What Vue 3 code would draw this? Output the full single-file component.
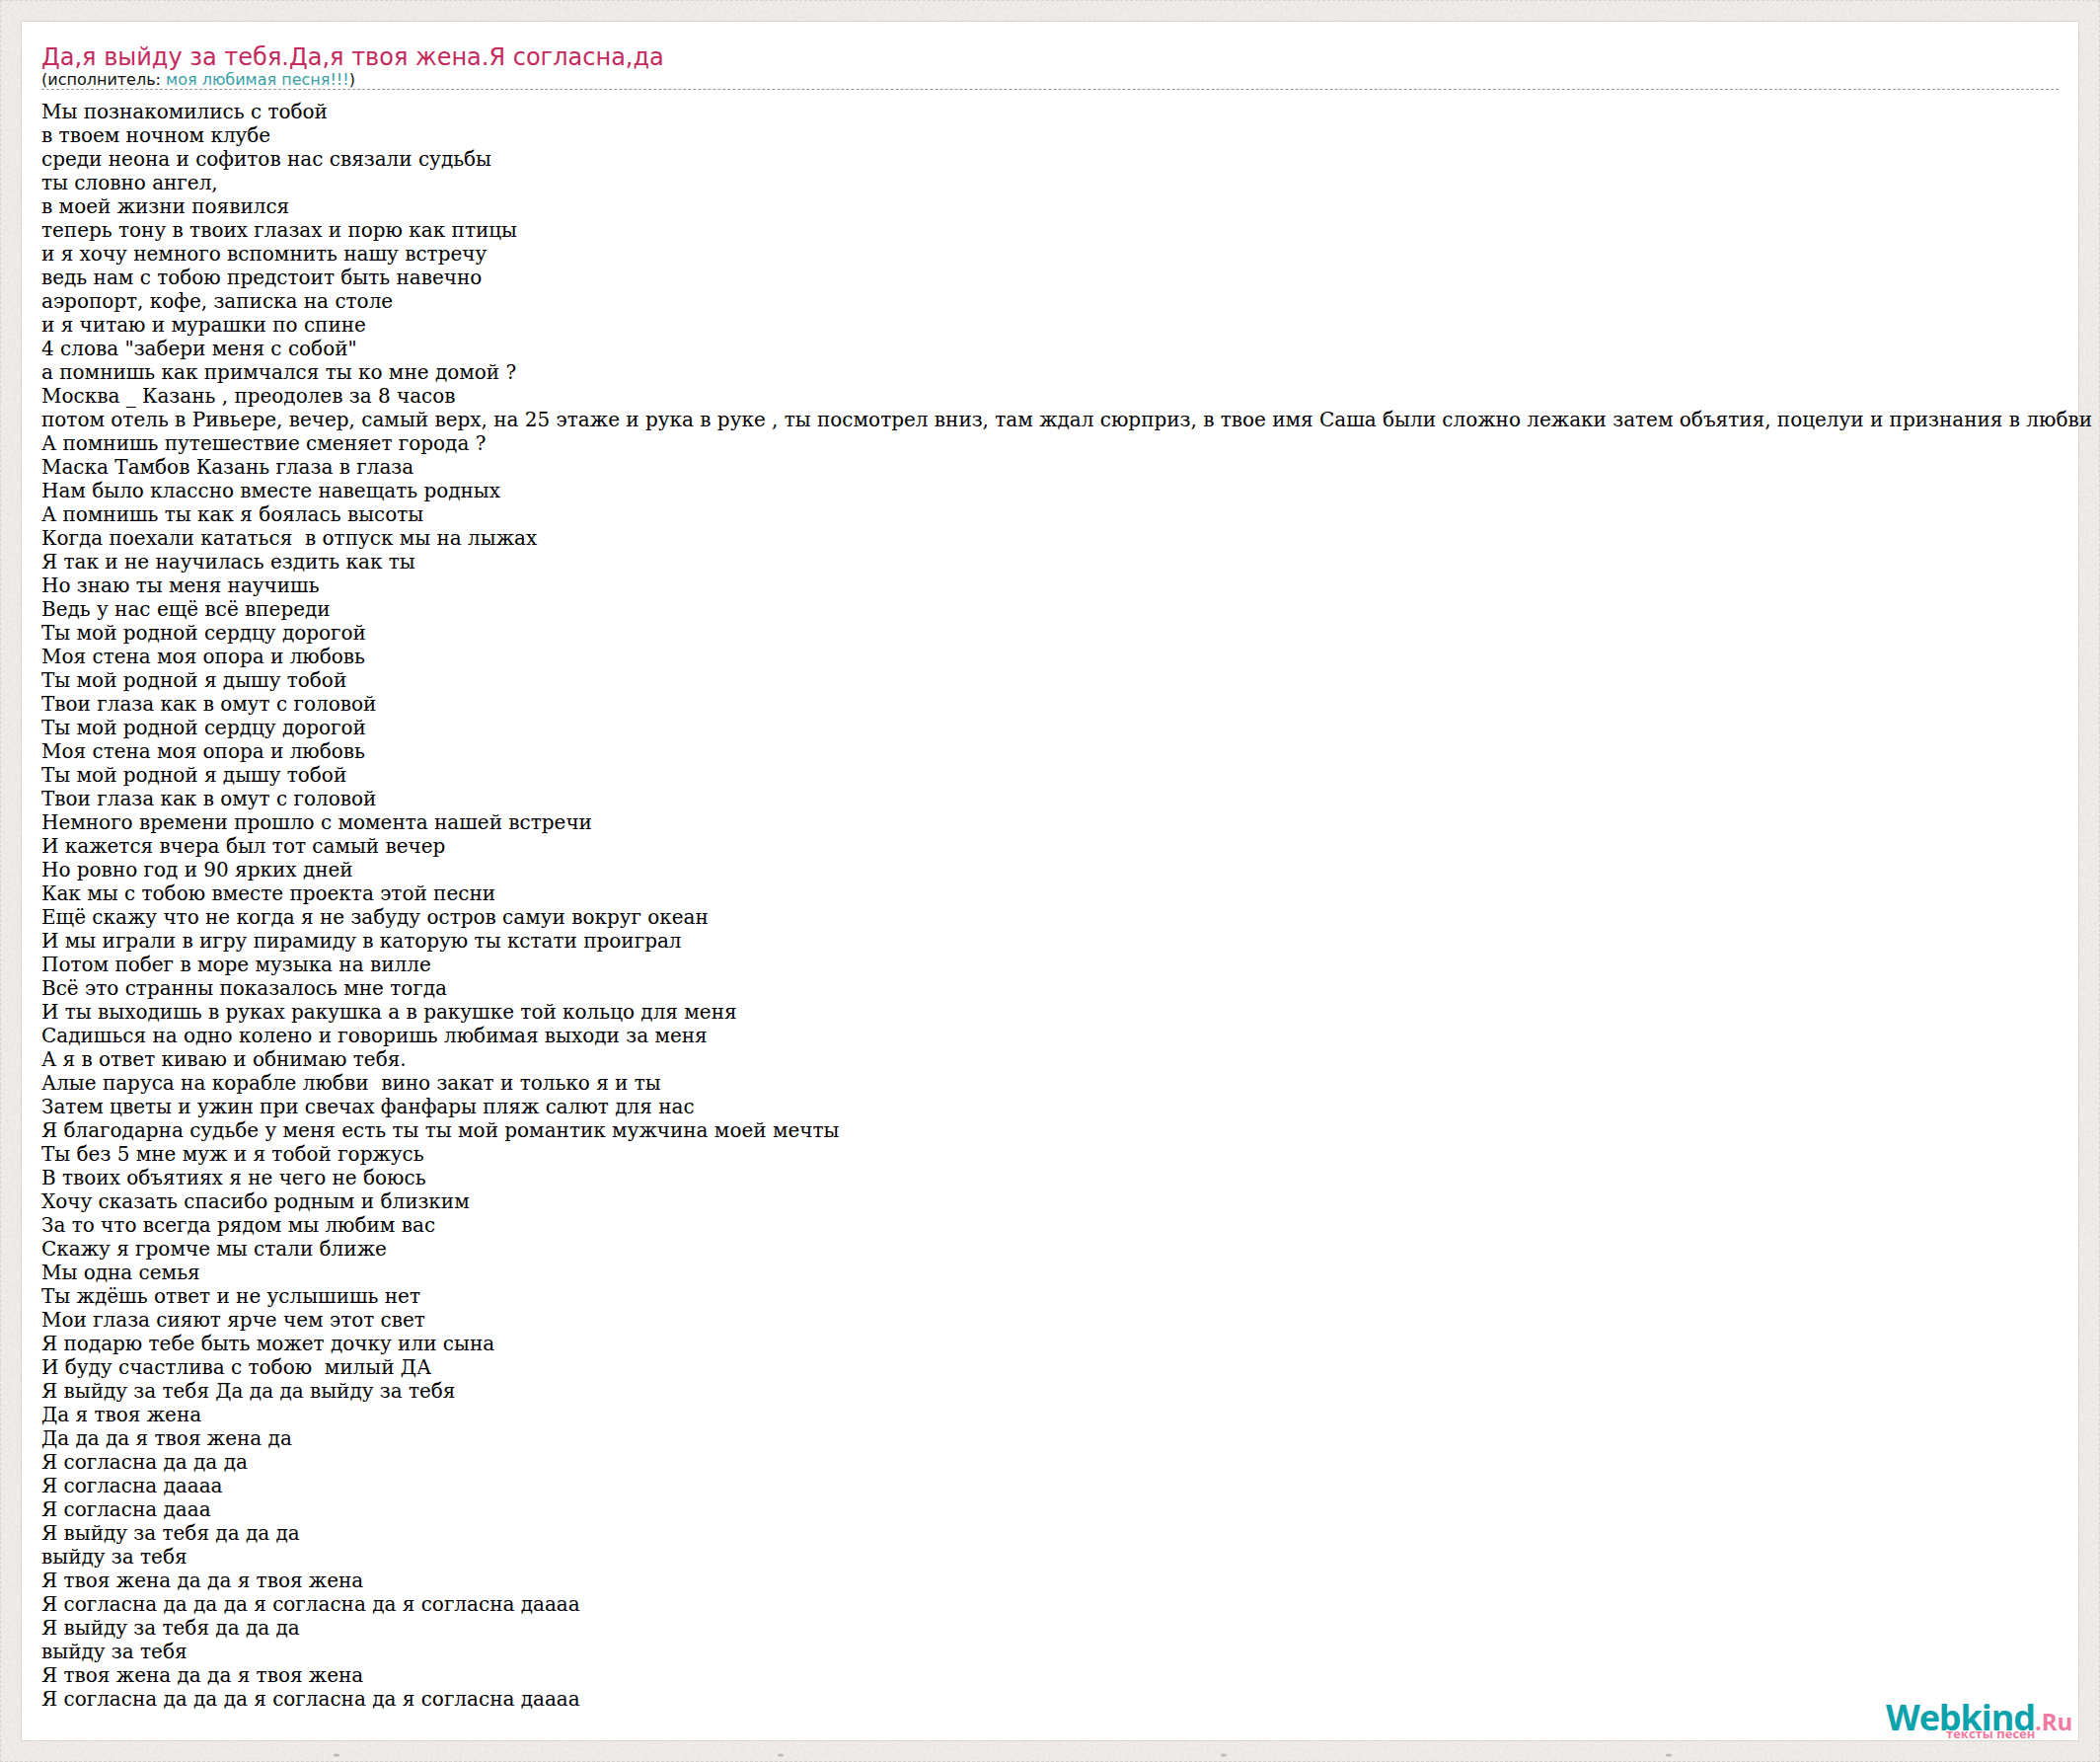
<script setup>
const specks = [341, 791, 1240, 1691]
const lines = `Мы познакомились с тобой
в твоем ночном клубе
среди неона и софитов нас связали судьбы
ты словно ангел,
в моей жизни появился
теперь тону в твоих глазах и порю как птицы
и я хочу немного вспомнить нашу встречу
ведь нам с тобою предстоит быть навечно
аэропорт, кофе, записка на столе
и я читаю и мурашки по спине
4 слова "забери меня с собой"
а помнишь как примчался ты ко мне домой ?
Москва _ Казань , преодолев за 8 часов
потом отель в Ривьере, вечер, самый верх, на 25 этаже и рука в руке , ты посмотрел вниз, там ждал сюрприз, в твое имя Саша были сложно лежаки затем объятия, поцелуи и признания в любви
А помнишь путешествие сменяет города ?
Маска Тамбов Казань глаза в глаза
Нам было классно вместе навещать родных
А помнишь ты как я боялась высоты
Когда поехали кататься  в отпуск мы на лыжах
Я так и не научилась ездить как ты
Но знаю ты меня научишь
Ведь у нас ещё всё впереди
Ты мой родной сердцу дорогой
Моя стена моя опора и любовь
Ты мой родной я дышу тобой
Твои глаза как в омут с головой
Ты мой родной сердцу дорогой
Моя стена моя опора и любовь
Ты мой родной я дышу тобой
Твои глаза как в омут с головой
Немного времени прошло с момента нашей встречи
И кажется вчера был тот самый вечер
Но ровно год и 90 ярких дней
Как мы с тобою вместе проекта этой песни
Ещё скажу что не когда я не забуду остров самуи вокруг океан
И мы играли в игру пирамиду в каторую ты кстати проиграл
Потом побег в море музыка на вилле
Всё это странны показалось мне тогда
И ты выходишь в руках ракушка а в ракушке той кольцо для меня
Садишься на одно колено и говоришь любимая выходи за меня
А я в ответ киваю и обнимаю тебя.
Алые паруса на корабле любви  вино закат и только я и ты
Затем цветы и ужин при свечах фанфары пляж салют для нас
Я благодарна судьбе у меня есть ты ты мой романтик мужчина моей мечты
Ты без 5 мне муж и я тобой горжусь
В твоих объятиях я не чего не боюсь
Хочу сказать спасибо родным и близким
За то что всегда рядом мы любим вас
Скажу я громче мы стали ближе
Мы одна семья
Ты ждёшь ответ и не услышишь нет
Мои глаза сияют ярче чем этот свет
Я подарю тебе быть может дочку или сына
И буду счастлива с тобою  милый ДА
Я выйду за тебя Да да да выйду за тебя
Да я твоя жена
Да да да я твоя жена да
Я согласна да да да
Я согласна даааа
Я согласна дааа
Я выйду за тебя да да да
выйду за тебя
Я твоя жена да да я твоя жена
Я согласна да да да я согласна да я согласна даааа
Я выйду за тебя да да да
выйду за тебя
Я твоя жена да да я твоя жена
Я согласна да да да я согласна да я согласна даааа`
</script>

<template>
  <div class="page">
    <svg class="texture" width="2128" height="1785" aria-hidden="true">
      <filter id="grain" x="0" y="0" width="100%" height="100%">
        <feTurbulence type="fractalNoise" baseFrequency="0.35" numOctaves="2" seed="4" />
        <feColorMatrix values="0 0 0 0 0.55  0 0 0 0 0.5  0 0 0 0 0.46  0.3 0 0 0 -0.08" />
      </filter>
      <rect width="2128" height="1785" filter="url(#grain)" />
      <ellipse
        v-for="x in specks"
        :key="x"
        :cx="x"
        cy="1778"
        rx="3"
        ry="1.5"
        fill="#bdb8b2"
      />
    </svg>
    <main class="card">
      <h1 class="title">Да,я выйду за тебя.Да,я твоя жена.Я согласна,да</h1>
      <div class="artist">(исполнитель: <a class="link">моя любимая песня!!!</a>)</div>
      <div class="lyrics">{{ lines }}</div>
      <div class="logo">
        <span class="brand">Webkind<span class="ru">.Ru</span></span>
        <span class="tag">тексты песен</span>
      </div>
    </main>
  </div>
</template>

<style>
html, body { margin: 0; padding: 0; overflow: hidden; }
</style>

<style scoped>
.page {
  position: relative;
  box-sizing: border-box;
  width: 2128px;
  height: 1785px;
  padding: 20px;
  background: #f1edeb;
  border: 1px dashed #d9d5d1;
}
.texture {
  position: absolute;
  left: -1px;
  top: -1px;
}
.card {
  position: relative;
  box-sizing: border-box;
  height: 1743px;
  padding: 21px 20px 0;
  background: #fff;
  border: 1px solid #d8d6d4;
}
.title {
  margin: 0;
  font: 400 24px/30px "DejaVu Sans", sans-serif;
  color: #c42a5e;
}
.artist {
  margin-top: -1px;
  padding-bottom: 1px;
  font: 16px/17px "DejaVu Sans", sans-serif;
  color: #111;
  border-bottom: 1px dashed #999;
}
.link { color: #3a9ea5; }
.lyrics {
  margin-top: 10px;
  font: 20px/24px "DejaVu Serif", serif;
  letter-spacing: -0.014px;
  color: #000;
  white-space: pre;
}
.logo {
  position: absolute;
  left: 1889px;
  top: 1696px;
  width: 190px;
  height: 44px;
}
.brand {
  position: absolute;
  left: 0;
  top: 0;
  font: 700 36px/44px "Open Sans", sans-serif;
  letter-spacing: -1.1px;
  color: #0ea2ad;
  white-space: nowrap;
}
.ru {
  font-size: 24px;
  letter-spacing: 0;
  color: #f2799f;
}
.tag {
  position: absolute;
  left: 61px;
  top: 32px;
  font: 700 13px/13px "Open Sans", sans-serif;
  color: #f2799f;
  white-space: nowrap;
}
</style>
